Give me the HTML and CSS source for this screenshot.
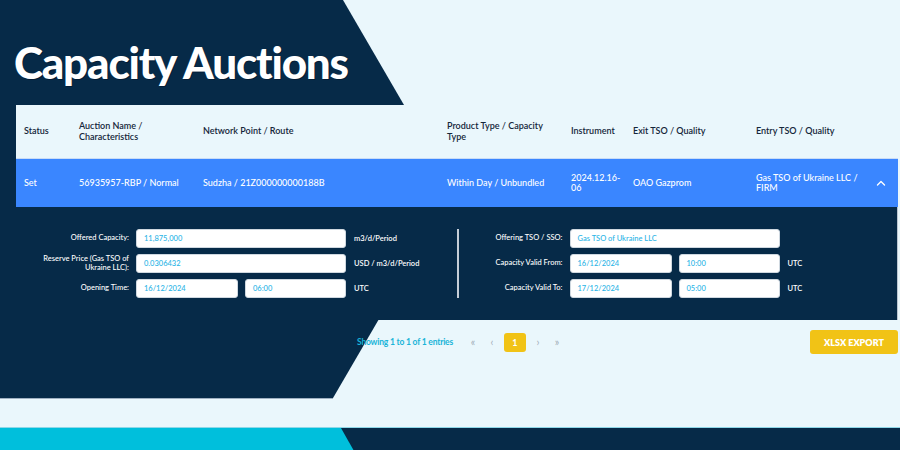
FILE: index.html
```html
<!DOCTYPE html>
<html lang="en">
<head>
<meta charset="utf-8">
<title>Capacity Auctions</title>
<link rel="stylesheet" href="styles.css">
</head>
<body>
<div class="page">
  <svg class="backdrop" width="900" height="450" viewBox="0 0 900 450" aria-hidden="true">
    <polygon points="0,0 343,0 404,105 0,105" fill="#062a48"/>
    <rect x="0" y="104" width="16" height="220" fill="#062a48"/>
    <polygon points="0,319 379,319 333,398 0,398" fill="#062a48"/>
    <line x1="0" y1="398.5" x2="333" y2="398.5" stroke="#9fb1c2" stroke-width="1"/>
  </svg>

  <header class="hero">
    <h1 class="title">Capacity Auctions</h1>
  </header>

  <section class="table">
    <div class="row head">
      <div class="cell">Status</div>
      <div class="cell">Auction Name / Characteristics</div>
      <div class="cell">Network Point / Route</div>
      <div class="cell">Product Type / Capacity Type</div>
      <div class="cell">Instrument</div>
      <div class="cell">Exit TSO / Quality</div>
      <div class="cell">Entry TSO / Quality</div>
      <div class="cell"></div>
    </div>
    <div class="row item">
      <div class="cell">Set</div>
      <div class="cell">56935957-RBP / Normal</div>
      <div class="cell">Sudzha / 21Z000000000188B</div>
      <div class="cell">Within Day / Unbundled</div>
      <div class="cell">2024.12.16-06</div>
      <div class="cell">OAO Gazprom</div>
      <div class="cell">Gas TSO of Ukraine LLC / FIRM</div>
      <div class="cell caret">
        <svg width="10" height="6" viewBox="0 0 10 6"><polyline points="1.5,5 5,1.5 8.5,5" fill="none" stroke="#ffffff" stroke-width="1.4" stroke-linecap="round" stroke-linejoin="round"/></svg>
      </div>
    </div>
    <div class="details">
      <div class="form left">
        <div class="label">Offered Capacity:</div>
        <div class="field wide">11,875,000</div>
        <div class="unit">m3/d/Period</div>

        <div class="label">Reserve Price (Gas TSO of Ukraine LLC):</div>
        <div class="field wide">0.0306432</div>
        <div class="unit">USD / m3/d/Period</div>

        <div class="label">Opening Time:</div>
        <div class="field">16/12/2024</div>
        <div class="field">06:00</div>
        <div class="unit">UTC</div>
      </div>
      <div class="divider"></div>
      <div class="form right">
        <div class="label">Offering TSO / SSO:</div>
        <div class="field wide">Gas TSO of Ukraine LLC</div>
        <div class="unit"></div>

        <div class="label">Capacity Valid From:</div>
        <div class="field">16/12/2024</div>
        <div class="field">10:00</div>
        <div class="unit">UTC</div>

        <div class="label">Capacity Valid To:</div>
        <div class="field">17/12/2024</div>
        <div class="field">05:00</div>
        <div class="unit">UTC</div>
      </div>
    </div>
  </section>

  <div class="pager-row">
    <div class="info">Showing 1 to 1 of 1 entries</div>
    <div class="pager">
      <span class="pg arrow">&laquo;</span>
      <span class="pg arrow">&lsaquo;</span>
      <span class="pg current">1</span>
      <span class="pg arrow">&rsaquo;</span>
      <span class="pg arrow">&raquo;</span>
    </div>
    <button class="export">XLSX EXPORT</button>
  </div>

  <footer class="footer"></footer>
</div>
</body>
</html>
```

FILE: styles.css
```css
* { box-sizing: border-box; }

html, body {
  margin: 0;
  padding: 0;
}

body {
  background: #eaf7fc;
  font-family: "Lato", "Liberation Sans", sans-serif;
  color: #0f2236;
}

.page {
  position: relative;
  width: 900px;
  height: 450px;
  overflow: hidden;
}

.backdrop {
  position: absolute;
  left: 0;
  top: 0;
  z-index: 0;
}

.hero {
  position: relative;
  z-index: 1;
  height: 105px;
  padding: 36px 0 0 14px;
}

.title {
  margin: 0;
  font-size: 44px;
  line-height: 53px;
  font-weight: 900;
  color: #ffffff;
  letter-spacing: -1.2px;
  text-shadow: 1px 1px 0 rgba(0, 10, 30, 0.45);
}

.table {
  position: relative;
  z-index: 1;
  margin-left: 16px;
  width: 882px;
}

.row {
  display: grid;
  grid-template-columns: 55px 124px 244px 124px 62px 123px 118px 1fr;
  align-items: center;
  padding-left: 8px;
}

.cell {
  padding-right: 12px;
  font-size: 9px;
  line-height: 10.5px;
}

.head {
  height: 53px;
  background: #eaf7fc;
  font-weight: 600;
  color: #14263a;
}

.item {
  height: 49px;
  background: #3a86ff;
  color: #ffffff;
  font-weight: 500;
  border-top: 1px solid #c9dcf7;
}

.caret {
  display: flex;
  justify-content: center;
  padding-right: 10px;
}

.details {
  height: 113px;
  background: #062a48;
  display: flex;
  padding: 22px 0 0 24px;
  border-right: 1px solid #b9c6d2;
}

.form {
  display: grid;
  grid-template-columns: 89px 102px 101px auto;
  grid-auto-rows: 19px;
  column-gap: 7px;
  row-gap: 6px;
  align-items: center;
}

.form.left {
  width: 417px;
}

.form.right {
  padding-left: 14px;
  grid-template-columns: 90px 102px 101px auto;
}

.label {
  text-align: right;
  color: #ffffff;
  font-size: 7.5px;
  line-height: 8.5px;
  font-weight: 500;
}

.field {
  height: 19px;
  background: #ffffff;
  border: 1px solid #cfd8e0;
  border-radius: 3px;
  padding: 0 7px;
  color: #2ab4e6;
  font-size: 7.5px;
  line-height: 17px;
  font-weight: 500;
}

.field.wide {
  grid-column: 2 / 4;
}

.unit {
  color: #ffffff;
  font-size: 7.5px;
  font-weight: 600;
  padding-left: 1px;
}

.divider {
  width: 1.5px;
  height: 69px;
  background: #c5ced8;
}

.pager-row {
  position: relative;
  z-index: 1;
  display: flex;
  align-items: center;
  width: 882px;
  margin: 10px 0 0 16px;
  height: 24px;
  padding-left: 341px;
}

.info {
  color: #18b4d8;
  font-size: 8.5px;
  font-weight: 700;
  letter-spacing: -0.2px;
}

.pager {
  display: flex;
  align-items: center;
  gap: 5px;
  margin-left: 13px;
}

.pg {
  display: flex;
  align-items: center;
  justify-content: center;
  height: 19px;
  font-size: 10.5px;
  font-weight: 400;
}

.pg.arrow {
  width: 14px;
  color: #a3aeb9;
}

.pg.current {
  width: 22px;
  background: #f1c316;
  border-radius: 3px;
  color: #ffffff;
  font-size: 9px;
  font-weight: 700;
}

.export {
  margin-left: auto;
  width: 88px;
  height: 24px;
  border: none;
  border-radius: 3px;
  background: #f1c316;
  color: #ffffff;
  font-family: "Lato", "Liberation Sans", sans-serif;
  font-size: 9px;
  font-weight: 800;
  padding: 0;
}

.footer {
  position: relative;
  z-index: 1;
  margin-top: 73px;
  height: 23px;
  background: #062a48;
  border-top: 1px solid #8fd8e8;
}

.footer::before {
  content: "";
  display: block;
  height: 23px;
  background: #00bfdc;
  clip-path: polygon(0 0, 341px 0, 354px 23px, 0 23px);
}
```
